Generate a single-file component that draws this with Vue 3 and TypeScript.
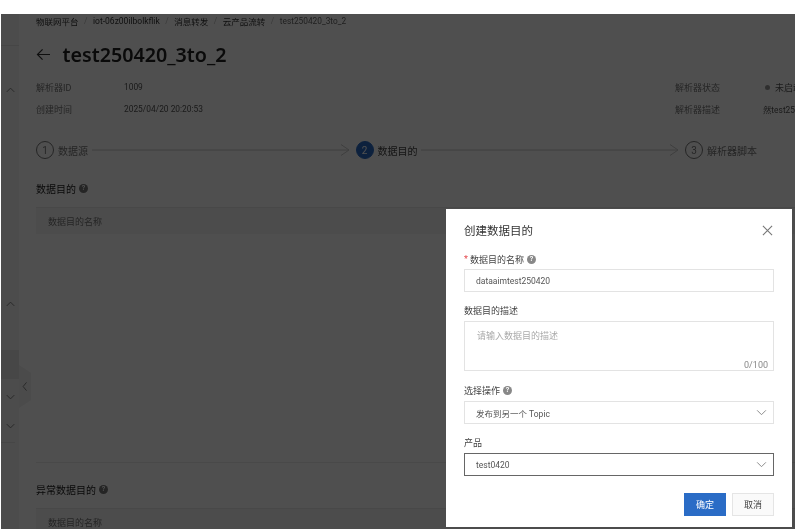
<script setup lang="ts">
interface Step { n: number; label: string; active?: boolean }
const steps: Step[] = [
  { n: 1, label: '数据源' },
  { n: 2, label: '数据目的', active: true },
  { n: 3, label: '解析器脚本' },
]
const crumbs = ['物联网平台', 'iot-06z00ilbolkflik', '消息转发', '云产品流转']
</script>

<template>
  <div class="shot">
    <div class="page">
      <aside class="rail">
        <div class="rail-top"></div>
        <svg class="chev first" viewBox="0 0 12 8"><path d="M1 6.5 6 1.5l5 5" /></svg>
        <svg class="chev second" viewBox="0 0 12 8"><path d="M1 6.5 6 1.5l5 5" /></svg>
        <div class="rail-active"></div>
        <svg class="chev third" viewBox="0 0 12 8"><path d="M1 1.5 6 6.5l5-5" /></svg>
        <svg class="chev fourth" viewBox="0 0 12 8"><path d="M1 1.5 6 6.5l5-5" /></svg>
        <div class="rail-line"></div>
      </aside>
      <div class="handle">
        <svg viewBox="0 0 8 14"><path d="M6 1.5 1.5 7 6 12.5" /></svg>
      </div>
      <main class="main">
        <nav class="crumbs">
          <template v-for="c in crumbs" :key="c">
            <span class="crumb">{{ c }}</span><span class="sep">/</span>
          </template>
          <span class="crumb-last">test250420_3to_2</span>
        </nav>
        <h1 class="title">
          <svg class="back" viewBox="0 0 16 14"><path d="M15 7H1.5M7 1.5 1.5 7 7 12.5" /></svg>
          <span>test250420_3to_2</span>
        </h1>
        <div class="info">
          <span class="k">解析器ID</span><span class="v">1009</span>
          <span class="k">解析器状态</span><span class="v status"><i class="dot"></i>未启动</span>
          <span class="k">创建时间</span><span class="v">2025/04/20 20:20:53</span>
          <span class="k">解析器描述</span><span class="v">然test250420</span>
        </div>
        <div class="steps">
          <template v-for="(s, i) in steps" :key="s.n">
            <span class="circle" :class="{ on: s.active }">{{ s.n }}</span>
            <span class="step-label" :class="{ on: s.active }">{{ s.label }}</span>
            <svg v-if="i < 2" class="arrow" viewBox="0 0 258 12" preserveAspectRatio="none"><path d="M0 6H257M249 .5 257 6l-8 5.500" /></svg>
          </template>
        </div>
        <h2 class="section first-section">数据目的 <span class="help dark">?</span></h2>
        <div class="thead">数据目的名称</div>
        <div class="tbody"></div>
        <h2 class="section">异常数据目的 <span class="help dark">?</span></h2>
        <div class="thead">数据目的名称</div>
      </main>
      <div class="mask"></div>
    </div>

    <section class="modal">
      <header class="modal-head">
        <h3>创建数据目的</h3>
        <svg class="close" viewBox="0 0 12 12"><path d="M1 1l10 10M11 1 1 11" /></svg>
      </header>
      <label class="lbl tight"><em>*</em>数据目的名称 <span class="help">?</span></label>
      <div class="field">dataaimtest250420</div>
      <label class="lbl">数据目的描述</label>
      <div class="area">
        <span class="ph">请输入数据目的描述</span>
        <span class="count">0/100</span>
      </div>
      <label class="lbl">选择操作 <span class="help">?</span></label>
      <div class="field select">发布到另一个 Topic
        <svg viewBox="0 0 12 8"><path d="M1 1.500 6 6.500l5-5" /></svg>
      </div>
      <label class="lbl">产品</label>
      <div class="field select focus">test0420
        <svg viewBox="0 0 12 8"><path d="M1 1.500 6 6.500l5-5" /></svg>
      </div>
      <footer class="actions">
        <button class="btn primary">确定</button>
        <button class="btn">取消</button>
      </footer>
    </section>
  </div>
</template>

<style>
html, body { background: #fff; }
</style>

<style scoped>
.shot {
  position: relative;
  width: 794px;
  height: 515px;
  margin: 14px 0 0 1px;
  overflow: hidden;
  font-family: Roboto, "Noto Sans CJK SC", sans-serif;
  font-size: 9px;
  color: #333;
  filter: blur(0.45px);
}
.page {
  position: relative;
  display: flex;
  height: 100%;
  background: #fff;
  overflow: hidden;
}
.mask {
  position: absolute;
  inset: 0;
  background: rgba(0, 0, 0, 0.69);
}
.rail {
  position: relative;
  flex: 0 0 18px;
  display: flex;
  flex-direction: column;
  align-items: center;
  background: #f6f6f6;
}
.rail-top { align-self: stretch; height: 1px; margin-top: 31px; background: #e2e2e2; }
.chev { width: 9px; height: 6px; flex: none; }
.chev path, .handle path { fill: none; stroke: #777; stroke-width: 1.2; }
.chev.first { margin-top: 41px; }
.chev.second { margin-top: 208px; }
.rail-active { align-self: stretch; height: 29px; margin-top: 43px; background: #e4e4e4; }
.chev.third { margin-top: 15px; }
.chev.fourth { margin-top: 23px; }
.rail-line { align-self: stretch; height: 1px; margin: 13px 4px 0 0; background: #e2e2e2; }
.handle {
  position: absolute;
  left: 18px;
  top: 351px;
  width: 12px;
  height: 43px;
  background: #f2f2f2;
  clip-path: polygon(0 0, 100% 18%, 100% 82%, 0 100%);
  display: flex;
  align-items: center;
  justify-content: center;
}
.handle svg { width: 6px; height: 11px; }
.main { flex: 1; min-width: 0; padding-left: 17px; }
.crumbs {
  display: flex;
  align-items: center;
  height: 14px;
  font-size: 8.500px;
  white-space: nowrap;
}
.sep { margin: 0 5.500px; color: #bbb; }
.crumb-last { color: #666; font-size: 8.300px; }
.title {
  display: flex;
  align-items: center;
  margin: 14px 0 0;
  height: 24px;
  font-family: "Noto Sans", "Noto Sans CJK SC", sans-serif;
  font-size: 19.700px;
  font-weight: 600;
  color: #222;
}
.back { width: 15px; height: 13px; margin-right: 11.500px; }
.back path { fill: none; stroke: #333; stroke-width: 1.300; }
.info {
  display: grid;
  grid-template-columns: 88px 551px 88px 1fr;
  grid-auto-rows: 22px;
  align-items: center;
  margin-top: 10px;
  white-space: nowrap;
}
.k { color: #777; }
.v { color: #555; font-size: 8.400px; }
.status { display: flex; align-items: center; font-size: 9px; }
.dot { width: 5px; height: 5px; margin: 0 5px 0 2px; border-radius: 50%; background: #999; }
.steps {
  display: flex;
  align-items: center;
  height: 18px;
  margin-top: 21px;
}
.circle {
  flex: none;
  width: 18px;
  height: 18px;
  box-sizing: border-box;
  border: 1px solid #777;
  border-radius: 50%;
  display: flex;
  align-items: center;
  justify-content: center;
  font-size: 10px;
  color: #777;
}
.circle.on { background: #2a6cc6; border-color: #2a6cc6; color: #fff; }
.step-label { flex: none; margin-left: 4px; font-size: 10px; color: #777; }
.step-label.on { color: #444; }
.arrow { flex: none; width: 258px; height: 12px; margin: 0 6px 0 3.500px; }
.arrow path { fill: none; stroke: #c8c8c8; stroke-width: 1; vector-effect: non-scaling-stroke; }
.section {
  display: flex;
  align-items: center;
  gap: 3px;
  margin: 0;
  height: 16px;
  font-size: 10px;
  font-weight: 400;
  color: #222;
}
.first-section { margin-top: 21px; }
.help {
  display: inline-flex;
  align-items: center;
  justify-content: center;
  width: 9px;
  height: 9px;
  border-radius: 50%;
  background: #888;
  color: #fff;
  font-size: 7px;
  font-weight: 700;
  line-height: 1;
}
.help.dark { background: #777; }
.thead {
  box-sizing: border-box;
  height: 27px;
  margin-top: 11px;
  padding-left: 12px;
  display: flex;
  align-items: center;
  background: #f4f4f4;
  border-top: 1px solid #e8e8e8;
  color: #777;
}
.tbody { height: 228px; border-bottom: 1px solid #ececec; }
.tbody + .section { margin-top: 18px; }
.modal {
  position: absolute;
  left: 445px;
  top: 195px;
  box-sizing: border-box;
  width: 346px;
  height: 318px;
  padding: 0 18px;
  background: #fff;
}
.modal-head {
  display: flex;
  align-items: center;
  justify-content: space-between;
  height: 42px;
}
.modal-head h3 { margin: 0; font-size: 11.500px; font-weight: 400; color: #333; }
.close { width: 11px; height: 11px; margin-right: 1px; }
.close path { fill: none; stroke: #777; stroke-width: 1.200; }
.lbl {
  display: flex;
  align-items: center;
  gap: 3px;
  height: 21px;
  margin-top: 8px;
  color: #444;
}
.lbl.tight { height: 20px; margin-top: -2px; gap: 1px; }
.lbl.tight .help { margin-left: 2px; }
.lbl em { color: #e5484d; font-style: normal; margin-right: 1px; }
.field {
  box-sizing: border-box;
  display: flex;
  align-items: center;
  justify-content: space-between;
  height: 23px;
  padding: 0 6px 0 11px;
  border: 1px solid #e3e3e3;
  color: #555;
  font-size: 8.500px;
}
.select svg { width: 11px; height: 7px; }
.select path { fill: none; stroke: #888; stroke-width: 1.100; }
.focus { border-color: #666; }
.area {
  position: relative;
  box-sizing: border-box;
  height: 50px;
  margin-bottom: 9px;
  padding: 7px 12px;
  border: 1px solid #e3e3e3;
}
.ph { color: #aaa; }
.count { position: absolute; right: 5px; bottom: 0; color: #888; }
.actions {
  display: flex;
  justify-content: flex-end;
  gap: 6px;
  margin-top: 17px;
}
.btn {
  width: 42px;
  height: 23px;
  padding: 0;
  border: 1px solid #e5e5e5;
  background: #fafafa;
  color: #444;
  font: inherit;
}
.btn.primary { background: #2a6cc6; border-color: #2a6cc6; color: #fff; }
</style>
